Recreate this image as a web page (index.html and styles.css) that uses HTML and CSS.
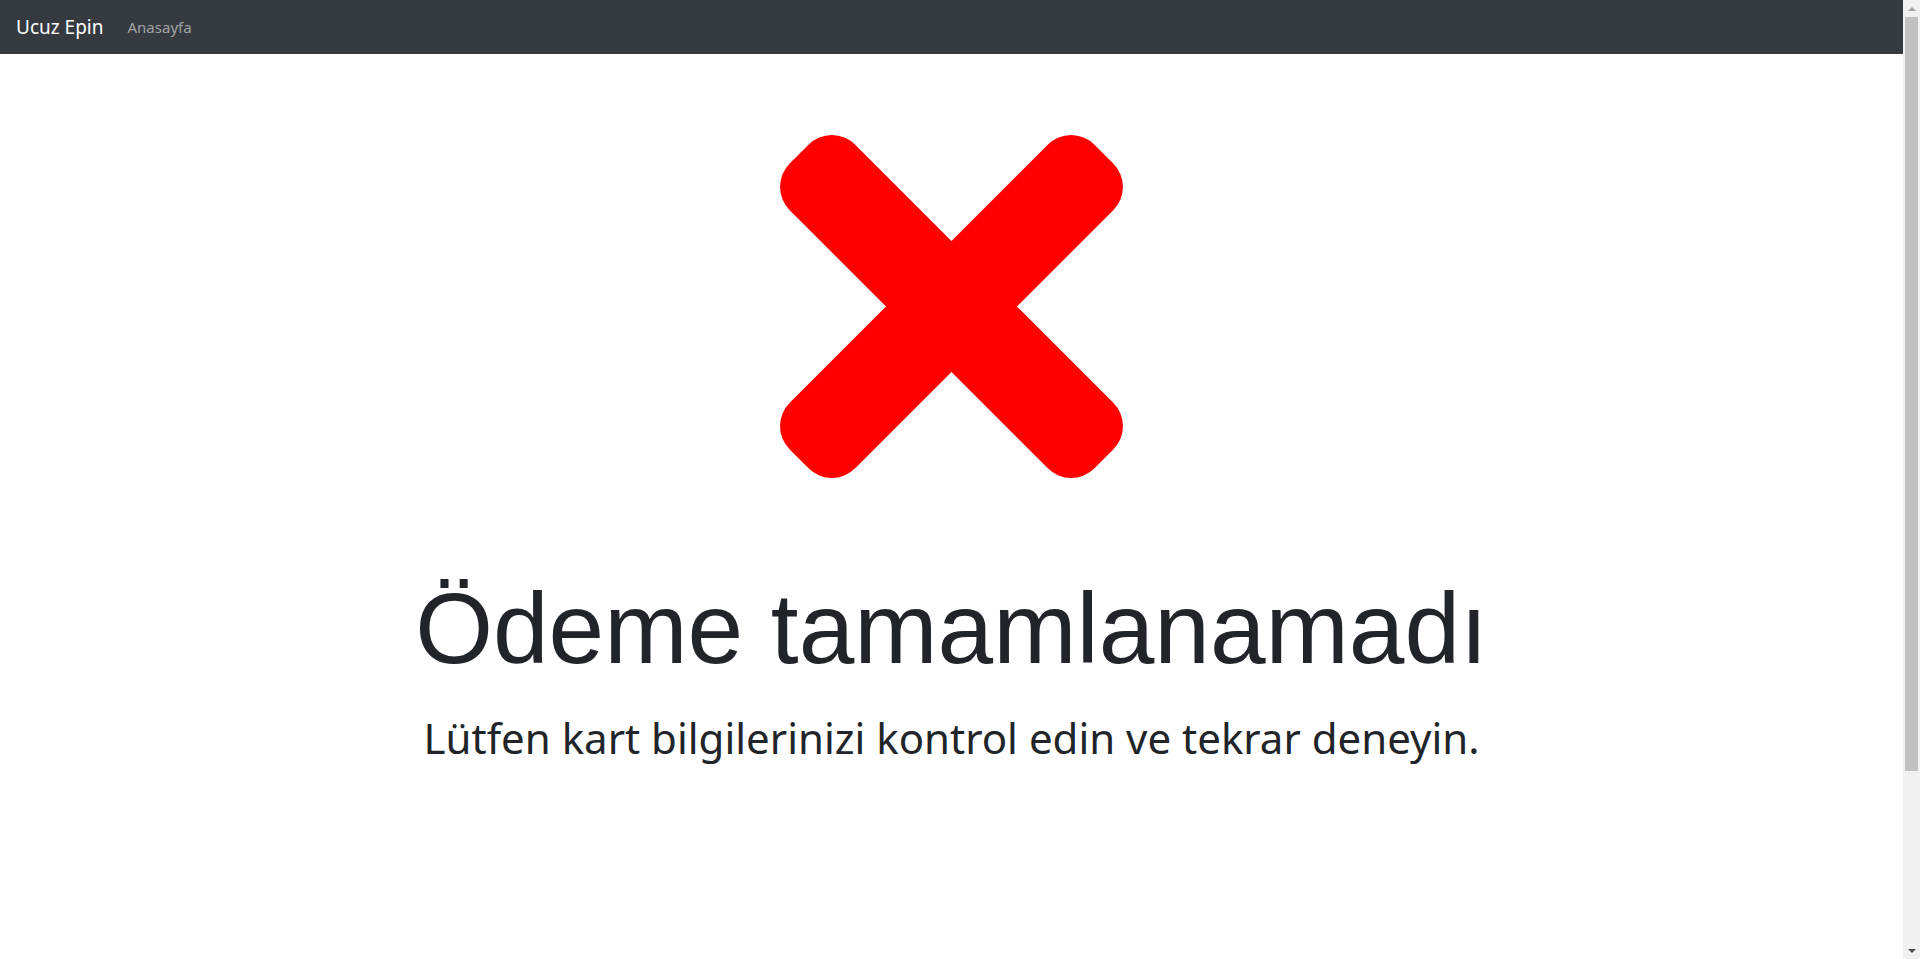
FILE: index.html
```html
<!DOCTYPE html>
<html lang="tr">
<head>
<meta charset="utf-8">
<title>Ödeme tamamlanamadı</title>
<link rel="stylesheet" href="styles.css">
</head>
<body>
<div class="page">
  <nav class="navbar">
    <a class="brand" href="#">Ucuz Epin</a>
    <a class="nav-link" href="#">Anasayfa</a>
  </nav>
  <main class="content">
    <svg class="fail-icon" width="343" height="343" viewBox="0 0 343 343" aria-hidden="true">
      <g transform="translate(171.5 171.5)" fill="#ff0000">
        <rect x="-215.5" y="-46.3" width="431" height="92.6" rx="33" ry="33" transform="rotate(45)"/>
        <rect x="-215.5" y="-46.3" width="431" height="92.6" rx="33" ry="33" transform="rotate(-45)"/>
      </g>
    </svg>
    <h1 class="title">Ödeme tamamlanamadı</h1>
    <p class="subtitle">Lütfen kart bilgilerinizi kontrol edin ve tekrar deneyin.</p>
  </main>
</div>
<div class="scrollbar" aria-hidden="true">
  <div class="sb-arrow sb-up"></div>
  <div class="sb-track"><div class="sb-thumb"></div></div>
  <div class="sb-arrow sb-down"></div>
</div>
</body>
</html>
```
FILE: styles.css
```css
html, body {
  margin: 0;
  padding: 0;
}
body {
  background: #fff;
  color: #212529;
  font-family: "Segoe UI", "Noto Sans", sans-serif;
  display: flex;
  height: 100vh;
  overflow: hidden;
}
.page {
  flex: 1;
  min-width: 0;
}
.navbar {
  height: 54px;
  background: #343a40;
  display: flex;
  align-items: center;
  padding: 0 16px;
  gap: 24px;
  box-sizing: border-box;
}
.brand {
  color: #fff;
  font-size: 19px;
  text-decoration: none;
  line-height: 1;
}
.nav-link {
  color: rgba(255, 255, 255, 0.55);
  font-size: 15px;
  text-decoration: none;
  line-height: 1;
}
.content {
  display: flex;
  flex-direction: column;
  align-items: center;
  padding-top: 81px;
}
.fail-icon {
  display: block;
}
.title {
  margin: 90px 0 0;
  font-family: "Liberation Sans", Arial, sans-serif;
  font-weight: 400;
  font-size: 100px;
  line-height: 1.2;
  white-space: nowrap;
}
.subtitle {
  margin: 25px 0 0;
  font-size: 42px;
  line-height: 1.2;
  white-space: nowrap;
}
.scrollbar {
  width: 17px;
  flex: none;
  background: #f1f1f1;
  display: flex;
  flex-direction: column;
}
.sb-arrow {
  height: 17px;
  flex: none;
  display: flex;
  align-items: center;
  justify-content: center;
}
.sb-arrow::before {
  content: "";
  width: 0;
  height: 0;
  border-left: 4px solid transparent;
  border-right: 4px solid transparent;
}
.sb-up::before {
  border-bottom: 4px solid #a3a3a3;
}
.sb-down::before {
  border-top: 4px solid #505050;
}
.sb-track {
  flex: 1;
  padding: 0 2px;
}
.sb-thumb {
  height: 754px;
  background: #c1c1c1;
}
```
